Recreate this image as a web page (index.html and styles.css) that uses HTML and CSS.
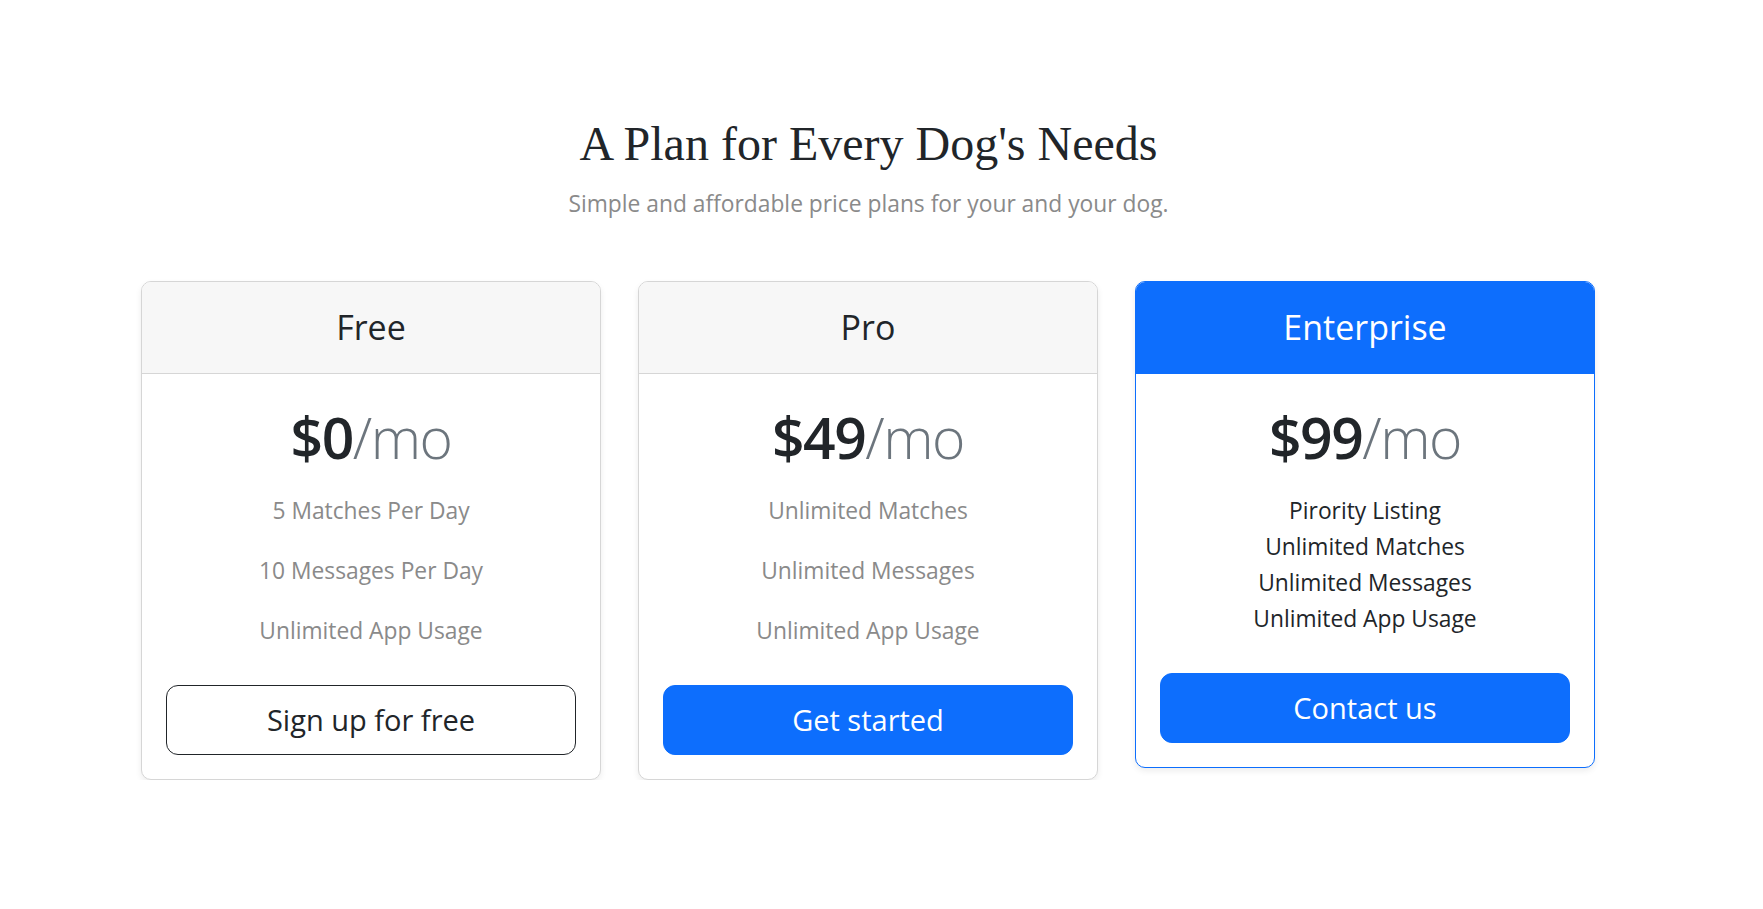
FILE: index.html
```html
<!DOCTYPE html>
<html lang="en">
<head>
<meta charset="utf-8">
<title>Pricing</title>
<link rel="stylesheet" href="styles.css">
</head>
<body>
<main class="pricing">
  <header class="intro">
    <h1 class="intro-title">A Plan for Every Dog's Needs</h1>
    <p class="intro-lead">Simple and affordable price plans for your and your dog.</p>
  </header>
  <div class="plans">
    <div class="card">
      <div class="card-header"><h4 class="plan-name">Free</h4></div>
      <div class="card-body">
        <h1 class="price">$0<small class="per">/mo</small></h1>
        <ul class="features spaced">
          <li>5 Matches Per Day</li>
          <li>10 Messages Per Day</li>
          <li>Unlimited App Usage</li>
        </ul>
        <button class="btn btn-outline">Sign up for free</button>
      </div>
    </div>
    <div class="card">
      <div class="card-header"><h4 class="plan-name">Pro</h4></div>
      <div class="card-body">
        <h1 class="price">$49<small class="per">/mo</small></h1>
        <ul class="features spaced">
          <li>Unlimited Matches</li>
          <li>Unlimited Messages</li>
          <li>Unlimited App Usage</li>
        </ul>
        <button class="btn btn-primary">Get started</button>
      </div>
    </div>
    <div class="card card-featured">
      <div class="card-header"><h4 class="plan-name">Enterprise</h4></div>
      <div class="card-body">
        <h1 class="price">$99<small class="per">/mo</small></h1>
        <ul class="features dark">
          <li>Pirority Listing</li>
          <li>Unlimited Matches</li>
          <li>Unlimited Messages</li>
          <li>Unlimited App Usage</li>
        </ul>
        <button class="btn btn-primary">Contact us</button>
      </div>
    </div>
  </div>
</main>
</body>
</html>
```
FILE: styles.css
```css
html {
  overflow-y: scroll;
}
body {
  margin: 0;
  background: #fff;
  color: #212529;
  font-family: "Open Sans", "Noto Sans", sans-serif;
}
.pricing {
  width: 1455px;
  margin-left: 141px;
  padding-top: 116px;
}
.intro {
  text-align: center;
}
.intro-title {
  margin: 0;
  font-family: "Liberation Serif", serif;
  font-weight: normal;
  font-size: 48px;
  line-height: 56px;
  color: #212529;
}
.intro-lead {
  margin: 16px 0 0;
  font-size: 22.8px;
  line-height: 32px;
  color: #8a8a8a;
}
.plans {
  display: grid;
  grid-template-columns: repeat(3, 460px);
  column-gap: 37px;
  align-items: start;
  margin-top: 61px;
}
.card {
  border: 1px solid #d6d6d6;
  border-radius: 10px;
  box-shadow: 0 3px 6px rgba(0, 0, 0, 0.075);
  overflow: hidden;
  background: #fff;
  text-align: center;
}
.card-header {
  background: #f7f7f7;
  border-bottom: 1px solid #d6d6d6;
  padding: 24px;
}
.plan-name {
  margin: 0;
  font-size: 34px;
  line-height: 43px;
  font-weight: normal;
}
.card-featured {
  border-color: #0d6efd;
}
.card-featured .card-header {
  background: #0d6efd;
  border-bottom-color: #0d6efd;
  color: #fff;
}
.card-body {
  padding: 24px;
}
.price {
  margin: 0;
  padding-top: 3px;
  font-size: 57px;
  line-height: 72px;
  font-weight: 600;
  letter-spacing: -1.5px;
  color: #212529;
}
.per {
  font-size: 57px;
  font-weight: 300;
  letter-spacing: -1.5px;
  color: #6c757d;
}
.features {
  list-style: none;
  margin: 20px 0 36px;
  padding: 0;
  font-size: 22.8px;
  line-height: 36px;
  color: #8a8a8a;
}
.features.spaced li + li {
  margin-top: 24px;
}
.features.dark {
  color: #212529;
}
.btn {
  display: block;
  width: 100%;
  box-sizing: border-box;
  padding: 11px 24px;
  font-family: inherit;
  font-size: 29px;
  line-height: 46px;
  border-radius: 12px;
  border: 1px solid transparent;
  cursor: pointer;
}
.btn-outline {
  background: #fff;
  border-color: #212529;
  color: #212529;
}
.btn-primary {
  background: #0d6efd;
  border-color: #0d6efd;
  color: #fff;
}
```
